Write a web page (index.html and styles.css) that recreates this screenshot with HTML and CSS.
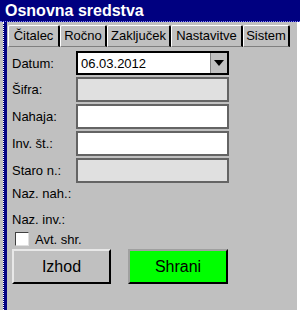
FILE: index.html
```html
<!DOCTYPE html>
<html lang="sl">
<head>
    <meta charset="UTF-8">
    <meta name="viewport" content="width=device-width, initial-scale=1.0">
    <title>Osnovna sredstva</title>
    <link rel="stylesheet" href="styles.css">
</head>
<body>
    <header class="titlebar">Osnovna sredstva</header>
    <div class="frame">
        <div class="edge"></div>
        <main class="content">
            <nav class="tabs">
                <div class="tab tab-citalec active">Čitalec</div>
                <div class="tab tab-rocno">Ročno</div>
                <div class="tab tab-zakljucek">Zaključek</div>
                <div class="tab tab-nastavitve">Nastavitve</div>
                <div class="tab tab-sistem">Sistem</div>
            </nav>

            <section class="form">
                <div class="row row-first">
                    <span class="label">Datum:</span>
                    <div class="field select">
                        <span class="value">06.03.2012</span>
                        <span class="drop"><span class="arrow"></span></span>
                    </div>
                </div>
                <div class="row">
                    <span class="label">Šifra:</span>
                    <div class="field disabled"></div>
                </div>
                <div class="row">
                    <span class="label">Nahaja:</span>
                    <div class="field"></div>
                </div>
                <div class="row">
                    <span class="label">Inv. št.:</span>
                    <div class="field"></div>
                </div>
                <div class="row">
                    <span class="label">Staro n.:</span>
                    <div class="field disabled"></div>
                </div>
                <div class="row plain">
                    <span class="label">Naz. nah.:</span>
                </div>
                <div class="row plain plain-second">
                    <span class="label">Naz. inv.:</span>
                </div>
                <div class="row check-row">
                    <span class="checkbox"></span>
                    <span class="check-label">Avt. shr.</span>
                </div>
                <div class="row buttons">
                    <button class="btn">Izhod</button>
                    <button class="btn btn-save">Shrani</button>
                </div>
            </section>
        </main>
    </div>
</body>
</html>
```

FILE: styles.css
```css
html, body {
    margin: 0;
    padding: 0;
    background: #fff;
    font-family: "Liberation Sans", Arial, sans-serif;
    font-size: 13px;
    color: #000;
}
.titlebar {
    height: 21px;
    line-height: 21px;
    padding-left: 5px;
    background-color: #000080;
    color: #fff;
    font-weight: bold;
    font-size: 16px;
    border-bottom: 1px dotted #8080ff;
}
.frame {
    display: flex;
    width: 297px;
    height: 288px;
    background: #c0c0c0;
}
.edge {
    width: 3px;
    margin-left: 3px;
    background: #000080;
    border-left: 1px dotted #fff;
}
.content {
    flex: 1;
    padding-left: 1px;
}
.tabs {
    display: flex;
    margin-top: 3px;
    height: 22px;
}
.tab {
    box-sizing: border-box;
    height: 22px;
    line-height: 19px;
    text-align: center;
    border-top: 1px solid #fff;
    border-left: 1px solid #fff;
    border-right: 2px solid #000;
    border-radius: 2px 2px 0 0;
    border-bottom: 1px solid #808080;
}
.tab-citalec { width: 52px; }
.tab-rocno { width: 47px; }
.tab-zakljucek { width: 64px; }
.tab-nastavitve { width: 72px; }
.tab-sistem { width: 47px; }

.form {
    display: flex;
    flex-direction: column;
    padding-left: 4px;
}
.row {
    display: flex;
    align-items: center;
    height: 25px;
    margin-top: 2px;
}
.row-first {
    height: 24px;
    margin-top: 4px;
}
.label {
    width: 64px;
}
.field {
    box-sizing: border-box;
    width: 153px;
    height: 100%;
    background: #fff;
    border: 2px solid #646464;
}
.field.disabled {
    background: #e0e0e0;
}
.field.select {
    display: flex;
    align-items: center;
    justify-content: space-between;
    border-color: #000;
    padding-left: 3px;
}
.drop {
    display: flex;
    align-items: center;
    justify-content: center;
    width: 16px;
    height: 100%;
    background: #c0c0c0;
    border-left: 1px solid #808080;
}
.arrow {
    width: 0;
    height: 0;
    border-left: 5px solid transparent;
    border-right: 5px solid transparent;
    border-top: 6px solid #000;
}
.row.plain {
    height: 20px;
    margin-top: 0;
}
.row.plain-second {
    margin-top: 6px;
}
.check-row {
    height: 16px;
    margin-top: 2px;
}
.checkbox {
    box-sizing: border-box;
    width: 14px;
    height: 14px;
    margin-left: 3px;
    background: #fff;
    border: 1px solid #404040;
    border-right-color: #e0e0e0;
    border-bottom-color: #e0e0e0;
}
.check-label {
    margin-left: 6px;
}
.row.buttons {
    height: 35px;
    margin-top: 2px;
    gap: 17px;
}
.btn {
    box-sizing: border-box;
    width: 99px;
    height: 35px;
    padding: 0;
    background: #c0c0c0;
    font-family: "Liberation Sans", Arial, sans-serif;
    font-size: 16px;
    color: #000;
    border: 2px solid #000;
    border-top-color: #e8e8e8;
    border-left-color: #e8e8e8;
}
.btn-save {
    width: 100px;
    background: #00ff00;
    border-top-color: #a0a0a0;
    border-left-color: #a0a0a0;
}
```
